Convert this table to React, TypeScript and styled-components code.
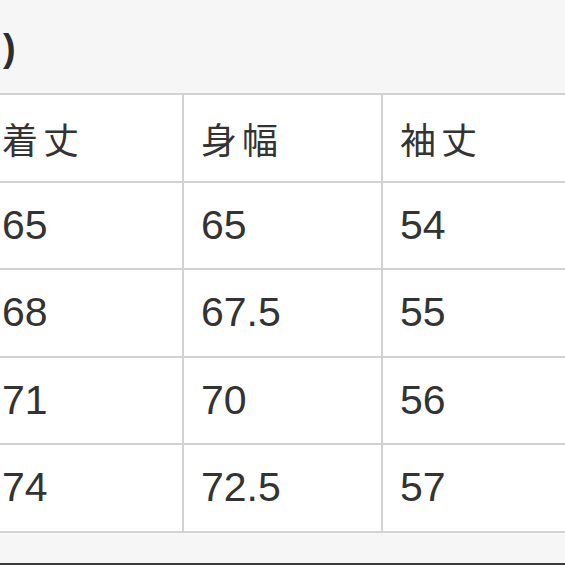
import React from "react";
import styled, { createGlobalStyle } from "styled-components";

const GlobalStyle = createGlobalStyle`
  html, body {
    margin: 0;
    padding: 0;
    background: #f6f6f6;
    overflow: hidden;
  }
  body {
    font-family: "Liberation Sans", "Noto Sans CJK JP", sans-serif;
    color: #333;
  }
`;

const Page = styled.div`
  width: 565px;
  height: 565px;
  display: flex;
  flex-direction: column;
  border-bottom: 2px solid #3a3a3a;
  box-sizing: border-box;
  overflow: hidden;
`;

const Heading = styled.h2`
  margin: 0;
  height: 93px;
  padding: 3px 0 0 3px;
  box-sizing: border-box;
  display: flex;
  align-items: center;
  font-family: "Liberation Sans", sans-serif;
  font-size: 38px;
  font-weight: 700;
  color: #2e2e2e;
  line-height: 1;
`;

const Table = styled.table`
  margin-left: -17px;
  width: 597px;
  table-layout: fixed;
  border-collapse: collapse;
  background: #fff;
`;

const Cell = styled.td<{ $head?: boolean }>`
  width: 199px;
  height: 87.5px;
  padding: 0 0 0 17px;
  box-sizing: border-box;
  border: 2px solid #d2d2d2;
  vertical-align: middle;
  font-family: ${(p) =>
    p.$head
      ? `"Noto Sans CJK JP", sans-serif`
      : `"Liberation Sans", sans-serif`};
  font-size: ${(p) => (p.$head ? "36px" : "41px")};
  letter-spacing: ${(p) => (p.$head ? "5px" : "0")};
  font-weight: 400;
  color: #333;
  line-height: 1;
`;

const headers = ["着丈", "身幅", "袖丈"];
const rows = [
  ["65", "65", "54"],
  ["68", "67.5", "55"],
  ["71", "70", "56"],
  ["74", "72.5", "57"],
];

export default function App() {
  return (
    <>
      <GlobalStyle />
      <Page>
        <Heading>)</Heading>
        <Table>
          <tbody>
            <tr>
              {headers.map((h) => (
                <Cell $head key={h}>
                  {h}
                </Cell>
              ))}
            </tr>
            {rows.map((r, i) => (
              <tr key={i}>
                {r.map((v, j) => (
                  <Cell key={j}>{v}</Cell>
                ))}
              </tr>
            ))}
          </tbody>
        </Table>
      </Page>
    </>
  );
}
